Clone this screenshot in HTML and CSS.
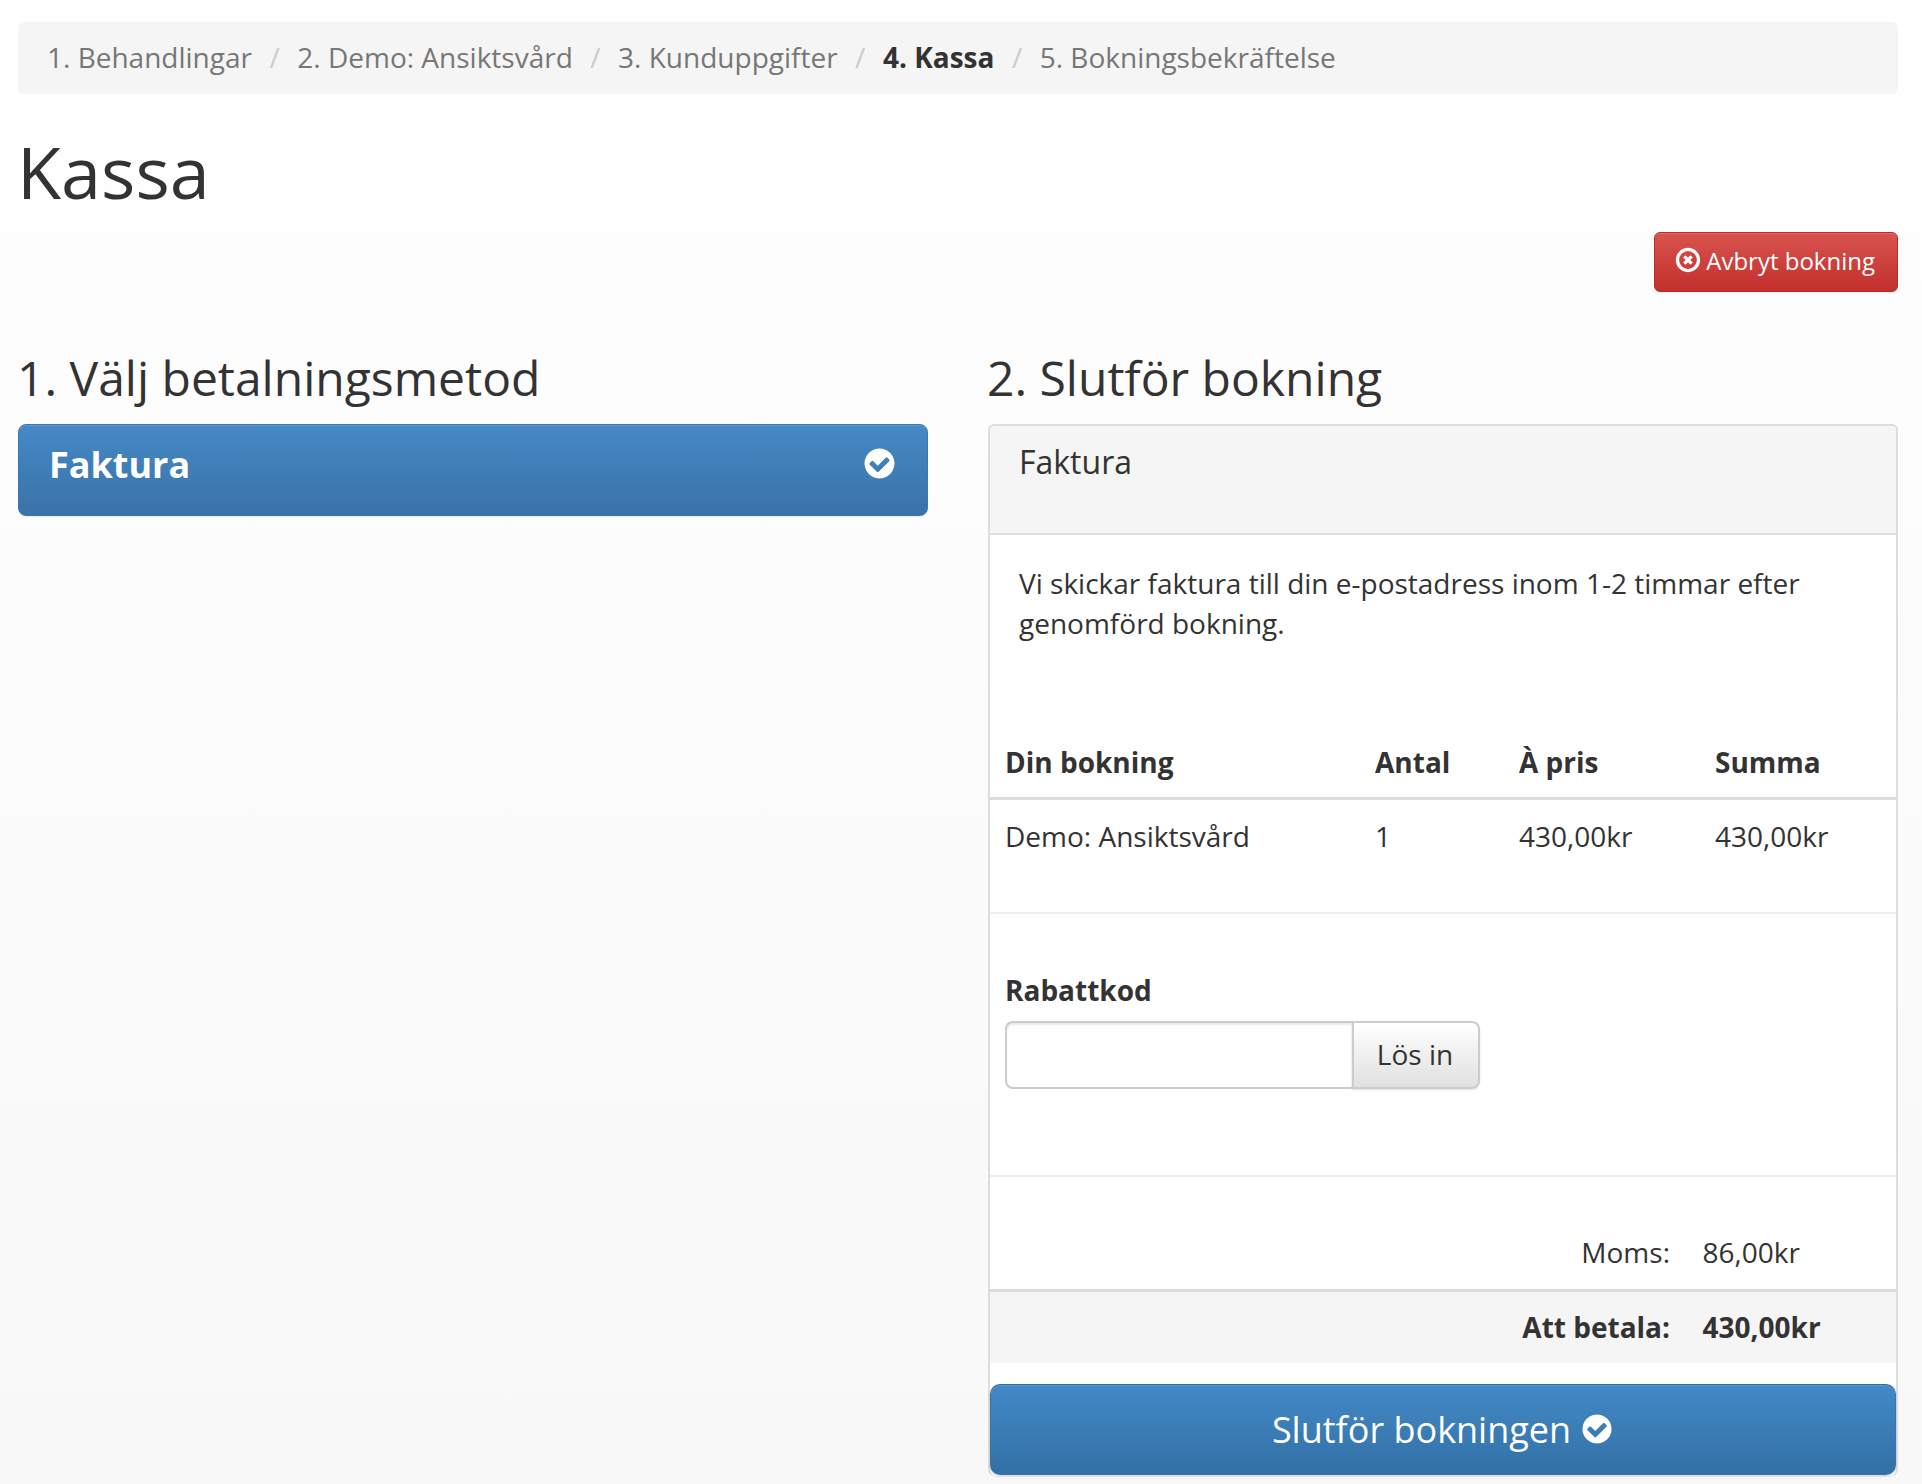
FILE: index.html
```html
<!DOCTYPE html>
<html lang="sv">
<head>
<meta charset="utf-8">
<title>Kassa</title>
<link rel="stylesheet" href="styles.css">
</head>
<body>
<svg class="defs" width="0" height="0" aria-hidden="true">
  <symbol id="check" viewBox="0 0 1792 1792"><path d="M1412 734q0-28-18-46l-91-90q-19-19-45-19t-45 19l-408 407-226-226q-19-19-45-19t-45 19l-91 90q-18 18-18 46 0 27 18 45l362 362q19 19 45 19 27 0 46-19l543-543q18-18 18-45zm252 162q0 209-103 385.500t-279.500 279.500-385.500 103-385.500-103-279.500-279.500-103-385.500 103-385.500 279.500-279.500 385.500-103 385.500 103 279.500 279.500 103 385.500z"/></symbol>
  <symbol id="cross" viewBox="0 0 24 24"><circle class="cross-line" cx="12" cy="12" r="9.7"/><path class="cross-line" d="M8.600 8.600l6.800 6.800M15.400 8.600l-6.800 6.800"/></symbol>
</svg>
<nav class="crumbs">
  <span class="crumb">1. Behandlingar</span><span class="sep">/</span>
  <span class="crumb">2. Demo: Ansiktsvård</span><span class="sep">/</span>
  <span class="crumb">3. Kunduppgifter</span><span class="sep">/</span>
  <span class="crumb current">4. Kassa</span><span class="sep">/</span>
  <span class="crumb">5. Bokningsbekräftelse</span>
</nav>
<h1 class="title">Kassa</h1>
<div class="actions">
  <button class="btn btn-red" type="button"><svg class="ico-cross"><use href="#cross"/></svg>Avbryt bokning</button>
</div>
<main class="columns">
  <section>
    <h2 class="heading">1. Välj betalningsmetod</h2>
    <div class="method"><span>Faktura</span><svg class="ico-method"><use href="#check"/></svg></div>
  </section>
  <section>
    <h2 class="heading">2. Slutför bokning</h2>
    <div class="panel">
      <div class="panel-head">Faktura</div>
      <p class="panel-text">Vi skickar faktura till din e-postadress inom 1-2 timmar efter genomförd bokning.</p>
      <div class="order">
        <div class="order-row order-head"><span>Din bokning</span><span>Antal</span><span>À pris</span><span>Summa</span></div>
        <div class="order-row order-item"><span>Demo: Ansiktsvård</span><span>1</span><span>430,00kr</span><span>430,00kr</span></div>
      </div>
      <div class="discount">
        <label class="discount-label" for="code">Rabattkod</label>
        <div class="discount-group">
          <input class="discount-input" id="code" type="text">
          <button class="discount-btn" type="button">Lös in</button>
        </div>
      </div>
      <div class="sum sum-tax"><span class="sum-label">Moms:</span><span class="sum-value">86,00kr</span></div>
      <div class="sum sum-total"><span class="sum-label">Att betala:</span><span class="sum-value">430,00kr</span></div>
      <button class="submit" type="button">Slutför bokningen<svg class="ico-submit"><use href="#check"/></svg></button>
    </div>
  </section>
</main>
</body>
</html>
```
FILE: styles.css
```css
* { box-sizing: border-box; }
html { min-height: 100%; }
body {
  margin: 0;
  height: 1484px;
  overflow: hidden;
  padding: 22px 24px 0 18px;
  font-family: "Open Sans", sans-serif;
  font-size: 28px;
  line-height: 40px;
  color: #333;
  background: linear-gradient(#fff, #f8f8f8);
}
.defs { position: absolute; }
svg { fill: currentColor; }
.cross-line { fill: none; stroke: currentColor; stroke-width: 3; }

.crumbs {
  height: 72px;
  padding: 0 29px 2px;
  display: flex;
  align-items: center;
  white-space: pre;
  background: #f5f5f5;
  border-radius: 6px;
  color: #777;
}
.sep { margin: 0 17.5px; color: #ccc; }
.current { color: #333; font-weight: 700; }

.title {
  margin: 0 0 0 -1px;
  height: 116px;
  padding-top: 35px;
  font-size: 72px;
  line-height: 84px;
  font-weight: 400;
  color: #333;
}
.actions { display: flex; justify-content: flex-end; margin-top: 22px; }
.btn {
  display: flex;
  align-items: center;
  height: 60px;
  padding: 0 22px 2px 20px;
  font: inherit;
  font-size: 24px;
  border-radius: 6px;
  color: #fff;
  cursor: pointer;
}
.btn-red {
  background: linear-gradient(#d8544f, #c22f2b);
  border: 1px solid #b92c28;
  box-shadow: inset 0 1px 0 rgba(255,255,255,.15), 0 1px 1px rgba(0,0,0,.075);
}
.ico-cross { width: 26px; height: 26px; margin: -3px 5px 0 0; }

.columns {
  display: grid;
  grid-template-columns: 910px 910px;
  column-gap: 60px;
  margin-top: 53px;
}
.heading {
  margin: 0 0 13px -1px;
  font-size: 48px;
  line-height: 66px;
  font-weight: 400;
  color: #333;
}
.method {
  height: 92px;
  padding: 0 30px 10px 30px;
  display: flex;
  align-items: center;
  justify-content: space-between;
  color: #fff;
  font-size: 36px;
  font-weight: 700;
  background: linear-gradient(#4589c5, #3a72a8);
  border: 1px solid #3a78b0;
  border-radius: 8px;
  box-shadow: inset 0 1px 0 rgba(255,255,255,.15), 0 1px 1px rgba(0,0,0,.075);
}
.ico-method { width: 35px; height: 35px; margin-top: -4px; }

.panel {
  border: 2px solid #ddd;
  border-bottom: 1px solid #eee;
  border-radius: 6px 6px 8px 8px;
  padding-bottom: 1px;
  background: #fff;
}
.panel-head {
  height: 109px;
  padding: 16px 29px;
  font-size: 32px;
  background: #f5f5f5;
  border-bottom: 2px solid #ddd;
  border-radius: 4px 4px 0 0;
}
.panel-text { margin: 28px 29px 0; height: 82px; }

.order-row {
  display: grid;
  grid-template-columns: 370px 144px 196px 1fr;
  padding-left: 15px;
}
.order-head {
  padding-top: 97px;
  height: 155px;
  font-weight: 700;
  border-bottom: 3px solid #ddd;
}
.order-item {
  height: 114px;
  padding-top: 16px;
  border-bottom: 2px solid #eee;
}

.discount {
  height: 263px;
  padding: 56px 15px 0;
  border-bottom: 2px solid #eee;
}
.discount-label { display: block; font-weight: 700; margin-bottom: 11px; }
.discount-group { display: flex; width: 475px; height: 68px; }
.discount-input {
  flex: 1;
  min-width: 0;
  border: 2px solid #ccc;
  border-right: 0;
  border-radius: 8px 0 0 8px;
  background: #fff;
  box-shadow: inset 0 2px 2px rgba(0,0,0,.08);
}
.discount-btn {
  width: 128px;
  padding: 0 2px 3px 0;
  font: inherit;
  color: #333;
  background: linear-gradient(#fff, #e0e0e0);
  border: 2px solid #ccc;
  border-radius: 0 8px 8px 0;
  box-shadow: inset 0 1px 0 rgba(255,255,255,.15), 0 1px 2px rgba(0,0,0,.12);
}

.sum {
  display: grid;
  grid-template-columns: 680px 1fr;
  column-gap: 32.5px;
}
.sum-label { text-align: right; }
.sum-tax { height: 115px; padding-top: 55px; border-bottom: 3px solid #ddd; }
.sum-total { height: 71px; padding-top: 15px; font-weight: 700; background: #f5f5f5; }

.submit {
  display: flex;
  align-items: center;
  justify-content: center;
  width: 906px;
  height: 91px;
  margin-top: 21px;
  padding: 0;
  font: inherit;
  font-size: 36px;
  color: #fff;
  background: linear-gradient(#4389c6, #3270a6);
  border: 1px solid #3a74a8;
  border-top-color: #2f6a9c;
  border-radius: 10px;
  box-shadow: inset 0 1px 0 rgba(255,255,255,.15), 0 1px 2px rgba(0,0,0,.2);
}
.ico-submit { width: 34px; height: 34px; margin: -2px 0 0 9px; }
```
